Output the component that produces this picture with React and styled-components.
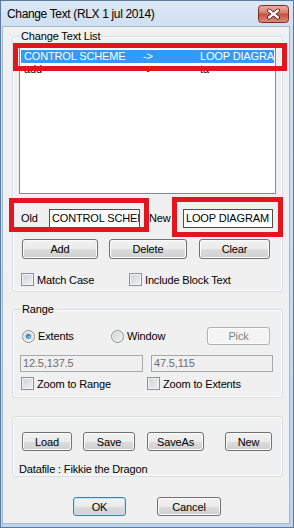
import styled, { createGlobalStyle } from "styled-components";

const GlobalStyle = createGlobalStyle`
  html, body {
    margin: 0;
    padding: 0;
    background: #fff;
  }
  body {
    font-family: "Liberation Sans", Arial, sans-serif;
    font-size: 11px;
    color: #000;
  }
`;

const Window = styled.div`
  position: relative;
  width: 294px;
  height: 528px;
  box-sizing: border-box;
  display: flex;
  flex-direction: column;
  overflow: hidden;
  background: linear-gradient(#dce8f5 0px, #d0e0f1 27px, #bfd4ea 100%);
  box-shadow: inset 0 0 0 1px #5a7ca0;
`;
const TitleBar = styled.div`
  height: 27px;
  flex-shrink: 0;
  display: flex;
  align-items: center;
  justify-content: space-between;
  padding: 0 5px 0 7px;
  box-sizing: border-box;
`;
const TitleText = styled.div`
  font-size: 12px;
  letter-spacing: -0.35px;
  color: #000;
`;
const CloseWrap = styled.div`
  width: 31px;
  height: 18px;
  display: flex;
`;
const Client = styled.div`
  flex: 1;
  margin: 0 5px 5px 3px;
  padding-left: 9px;
  background: #f0f0f0;
  display: flex;
  flex-direction: column;
  box-shadow: 0 0 0 1px #a3b9d1;
  letter-spacing: -0.15px;
`;
const GroupBox = styled.div`
  position: relative;
  width: 271px;
  height: ${(p) => p.$height}px;
  margin-top: ${(p) => p.$top}px;
  padding: ${(p) => p.$pt}px 0 0 ${(p) => p.$pl}px;
  box-sizing: border-box;
  border: 1px solid #d5dfe5;
  border-radius: 3px;
  box-shadow: inset 0 0 0 1px #fbfcfd;
  display: flex;
  flex-direction: column;
  flex-shrink: 0;
`;
const Legend = styled.span`
  position: absolute;
  top: -7px;
  left: ${(p) => p.$left}px;
  padding: 0 1px;
  line-height: 13px;
  background: #f0f0f0;
`;
const ListBox = styled.div`
  width: 257px;
  height: 149px;
  box-sizing: border-box;
  border: 1px solid #828790;
  background: #fff;
  padding-top: 4px;
`;
const ListRow = styled.div`
  display: flex;
  height: 13px;
  line-height: 13px;
  margin: 0 1px;
  padding-left: 3px;
  white-space: nowrap;
  overflow: hidden;
  background: ${(p) => (p.$selected ? "#3399ff" : "transparent")};
  color: ${(p) => (p.$selected ? "#fff" : "#000")};
`;
const Col = styled.span`
  flex-shrink: 0;
  width: ${(p) => (p.$width ? `${p.$width}px` : "auto")};
`;
const Row = styled.div`
  display: flex;
  align-items: center;
  height: ${(p) => p.$height}px;
  margin-top: ${(p) => p.$top || 0}px;
`;
const FieldLabel = styled.span`
  width: ${(p) => p.$width}px;
  margin-left: ${(p) => p.$left || 0}px;
  flex-shrink: 0;
`;
const TextBox = styled.div`
  width: ${(p) => p.$width}px;
  height: ${(p) => (p.$disabled ? 17 : 19)}px;
  margin-left: ${(p) => p.$left || 0}px;
  box-sizing: border-box;
  border: 1px solid ${(p) => (p.$disabled ? "#a8a8a8" : "#4d4d4d")};
  background: ${(p) => (p.$disabled ? "#f0f0f0" : "#fff")};
  color: ${(p) => (p.$disabled ? "#6d6d6d" : "#000")};
  padding-left: 2px;
  line-height: ${(p) => (p.$disabled ? 15 : 17)}px;
  white-space: nowrap;
  overflow: hidden;
  flex-shrink: 0;
`;
const Button = styled.div`
  width: ${(p) => p.$width}px;
  height: ${(p) => p.$height || 20}px;
  margin-left: ${(p) => p.$left || 0}px;
  box-sizing: border-box;
  flex-shrink: 0;
  display: flex;
  align-items: center;
  justify-content: center;
  border: 1px solid ${(p) => (p.$default ? "#3c7fb1" : p.$disabled ? "#adb2b5" : "#707070")};
  border-radius: 3px;
  background: ${(p) =>
    p.$disabled
      ? "#f4f4f4"
      : "linear-gradient(#f2f2f2 0%, #ebebeb 50%, #dddddd 51%, #cfcfcf 100%)"};
  box-shadow: inset 0 0 0 1px ${(p) => (p.$default ? "#bfe6f7" : "#fcfcfc")};
  color: ${(p) => (p.$disabled ? "#838383" : "#000")};
`;
const CheckItem = styled.div`
  display: flex;
  align-items: center;
  gap: 3px;
  width: ${(p) => p.$width}px;
  margin-left: ${(p) => p.$left || 0}px;
  flex-shrink: 0;
`;
const CheckBox = styled.span`
  width: 13px;
  height: 13px;
  box-sizing: border-box;
  border: 1px solid #8e8f8f;
  background: linear-gradient(135deg, #cdd1d6 0%, #f2f2f3 100%);
  box-shadow: inset 0 0 0 1px #f4f4f4;
  flex-shrink: 0;
`;
const Radio = styled.span`
  position: relative;
  width: 13px;
  height: 13px;
  box-sizing: border-box;
  border-radius: 50%;
  border: 1px solid #8e8f8f;
  background: linear-gradient(135deg, #c9cdd2 0%, #f6f6f6 100%);
  box-shadow: inset 0 0 0 1px #f4f4f4;
  flex-shrink: 0;

  &::after {
    content: "";
    display: ${(p) => (p.$checked ? "block" : "none")};
    position: absolute;
    left: 3px;
    top: 3px;
    width: 5px;
    height: 5px;
    border-radius: 50%;
    background: radial-gradient(circle at 60% 65%, #8ed7f5 0%, #2d7bb5 55%, #174d7a 100%);
  }
`;
const DataFile = styled.div`
  margin: 12px 0 0 -3px;
  line-height: 13px;
`;
const Annotation = styled.div`
  position: absolute;
  left: ${(p) => p.$x}px;
  top: ${(p) => p.$y}px;
  width: ${(p) => p.$w}px;
  height: ${(p) => p.$h}px;
  box-sizing: border-box;
  border: 5px solid #e3151e;
  pointer-events: none;
`;

const CloseIcon = () => (
  <svg width="31" height="18" viewBox="0 0 31 18">
    <defs>
      <linearGradient id="closeGrad" x1="0" y1="0" x2="0" y2="1">
        <stop offset="0" stopColor="#eab3a7" />
        <stop offset="0.45" stopColor="#d67a68" />
        <stop offset="0.5" stopColor="#c4503c" />
        <stop offset="1" stopColor="#dc907a" />
      </linearGradient>
    </defs>
    <rect x="0.5" y="0.5" width="30" height="17" rx="3" fill="url(#closeGrad)" stroke="#7a3026" />
    <path d="M11 5.5 L20 12.5 M20 5.5 L11 12.5" stroke="#4a1a14" strokeWidth="4" strokeLinecap="round" />
    <path d="M11 5.5 L20 12.5 M20 5.5 L11 12.5" stroke="#fff" strokeWidth="2.3" strokeLinecap="round" />
  </svg>
);

const rows = [
  { from: "CONTROL SCHEME", to: "LOOP DIAGRAM", selected: true },
  { from: "add", to: "ta" },
];

const App = () => (
  <>
    <GlobalStyle />
    <Window>
      <TitleBar>
        <TitleText>Change Text (RLX 1 jul 2014)</TitleText>
        <CloseWrap>
          <CloseIcon />
        </CloseWrap>
      </TitleBar>
      <Client>
        <GroupBox $top={9} $height={256} $pt={8} $pl={6}>
          <Legend $left={7}>Change Text List</Legend>
          <ListBox>
            {rows.map((r) => (
              <ListRow key={r.from} $selected={r.selected}>
                <Col $width={119}>{r.from}</Col>
                <Col $width={57}>-&gt;</Col>
                <Col>{r.to}</Col>
              </ListRow>
            ))}
          </ListBox>
          <Row $height={20} $top={14}>
            <FieldLabel $left={2} $width={28}>Old</FieldLabel>
            <TextBox $width={91}>CONTROL SCHEME</TextBox>
            <FieldLabel $left={9} $width={34}>New</FieldLabel>
            <TextBox $width={90}>LOOP DIAGRAM</TextBox>
          </Row>
          <Row $height={20} $top={11}>
            <Button $left={3} $width={76}>Add</Button>
            <Button $left={11} $width={78}>Delete</Button>
            <Button $left={12} $width={71}>Clear</Button>
          </Row>
          <Row $height={13} $top={14}>
            <CheckItem $left={2} $width={108}>
              <CheckBox />
              Match Case
            </CheckItem>
            <CheckItem>
              <CheckBox />
              Include Block Text
            </CheckItem>
          </Row>
        </GroupBox>

        <GroupBox $top={17} $height={89} $pt={17} $pl={7}>
          <Legend $left={8}>Range</Legend>
          <Row $height={18}>
            <CheckItem $left={2} $width={89}>
              <Radio $checked />
              Extents
            </CheckItem>
            <CheckItem $width={96}>
              <Radio />
              Window
            </CheckItem>
            <Button $width={63} $height={18} $disabled>Pick</Button>
          </Row>
          <Row $height={17} $top={10}>
            <TextBox $width={123} $disabled>12.5,137.5</TextBox>
            <TextBox $left={8} $width={122} $disabled>47.5,115</TextBox>
          </Row>
          <Row $height={13} $top={5}>
            <CheckItem $left={1} $width={126}>
              <CheckBox />
              Zoom to Range
            </CheckItem>
            <CheckItem>
              <CheckBox />
              Zoom to Extents
            </CheckItem>
          </Row>
        </GroupBox>

        <GroupBox $top={18} $height={61} $pt={15} $pl={9}>
          <Row $height={19}>
            <Button $width={50} $height={19}>Load</Button>
            <Button $left={11} $width={52} $height={19}>Save</Button>
            <Button $left={12} $width={57} $height={19}>SaveAs</Button>
            <Button $left={21} $width={47} $height={19}>New</Button>
          </Row>
          <DataFile>Datafile : Fikkie the Dragon</DataFile>
        </GroupBox>

        <Row $height={19} $top={20}>
          <Button $left={61} $width={53} $height={19} $default>OK</Button>
          <Button $left={31} $width={64} $height={19}>Cancel</Button>
        </Row>
      </Client>
      <Annotation $x={13} $y={43} $w={274} $h={28} />
      <Annotation $x={9} $y={198} $w={140} $h={34} />
      <Annotation $x={172} $y={197} $w={111} $h={40} />
    </Window>
  </>
);

export default App;
